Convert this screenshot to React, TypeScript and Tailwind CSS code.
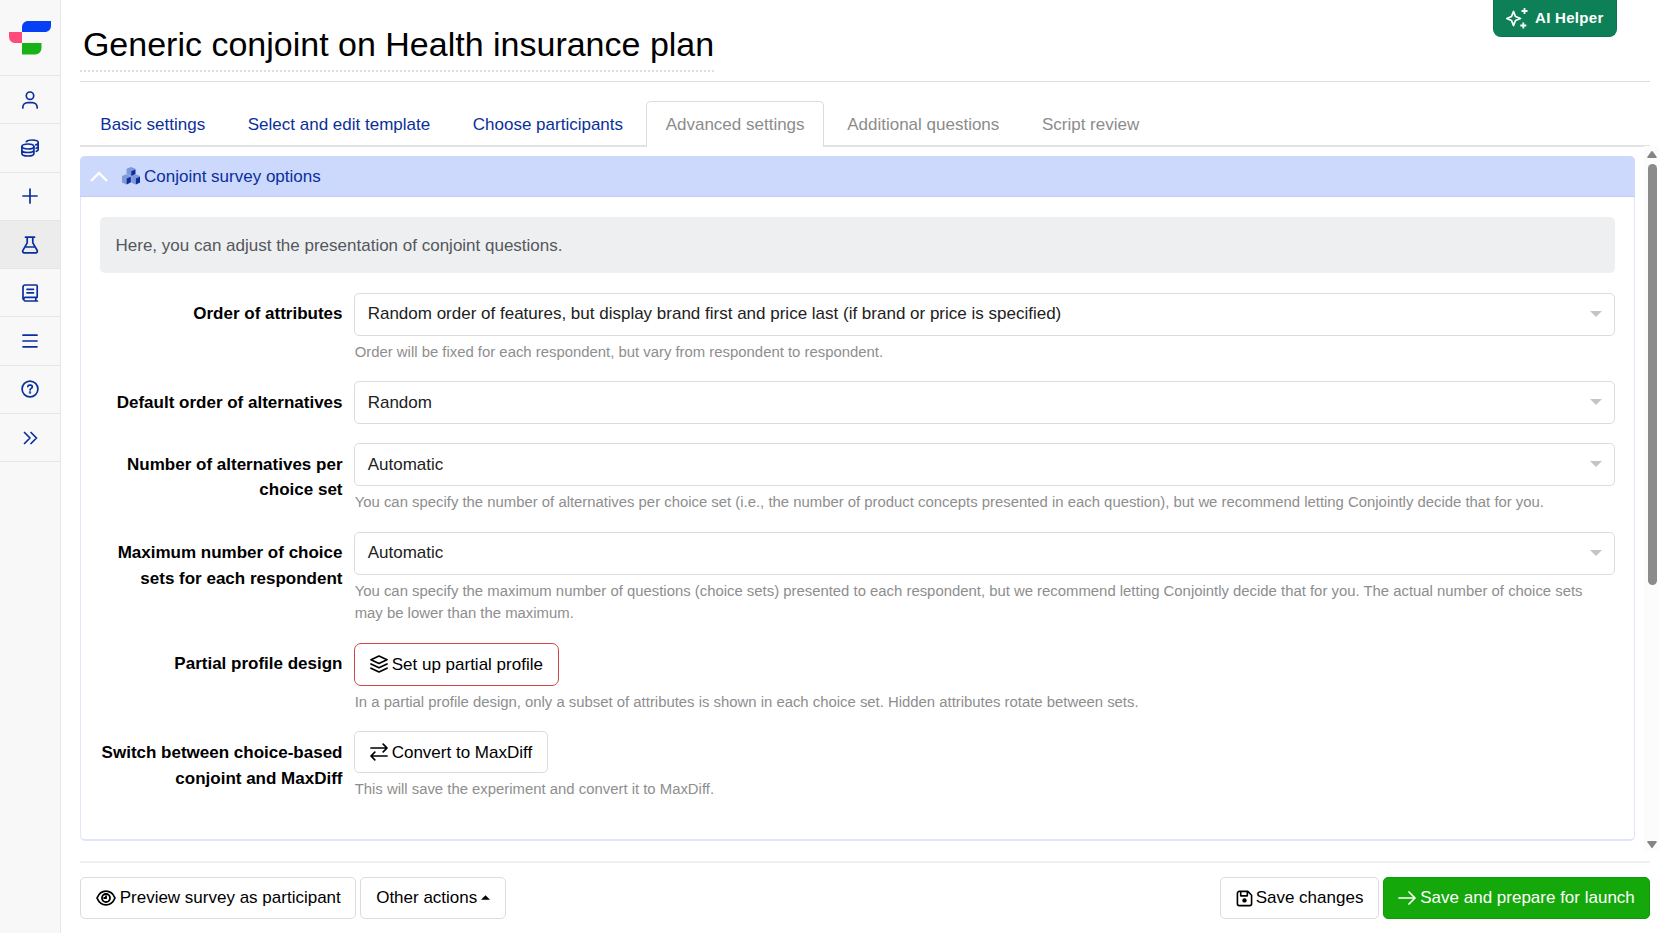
import React, { ReactNode } from "react";

interface IconProps {
  children: ReactNode;
  size?: number;
  className?: string;
}

const Icon = ({ children, size = 18, className = "" }: IconProps) => (
  <svg
    className={`shrink-0 ${className}`}
    width={size}
    height={size}
    viewBox="0 0 18 18"
    fill="none"
    stroke="currentColor"
    strokeWidth="1.7"
    strokeLinecap="round"
    strokeLinejoin="round"
  >
    {children}
  </svg>
);

const menuItems: { name: string; active?: boolean; icon: ReactNode }[] = [
  {
    name: "account",
    icon: (
      <>
        <circle cx="9" cy="4.700" r="3.700" />
        <path d="M1.800 17v-.4c0-3 2.300-5 5-5h4.400c2.700 0 5 2 5 5v.4" />
      </>
    ),
  },
  {
    name: "billing",
    icon: (
      <>
        <ellipse cx="6.900" cy="7.500" rx="6" ry="2.500" />
        <path d="M.9 7.500v7c0 1.400 2.700 2.500 6 2.500s6-1.100 6-2.500v-7M.9 11c0 1.400 2.700 2.500 6 2.500s6-1.100 6-2.500" />
        <path d="M5.300 2.700C6.300 1.600 8.600 1 11.200 1c3.300 0 6 1 6 2.500v7c0 .8-.8 1.400-1.900 1.800M17.200 3.700c0 1-.9 1.800-2.400 2.200M17.200 7.300c0 .9-.8 1.500-2 1.900" />
      </>
    ),
  },
  { name: "create", icon: <path d="M9 2v14M2 9h14" /> },
  {
    name: "experiments",
    active: true,
    icon: (
      <path d="M4.500 1.200h9M6.200 1.200v5.600l-4.300 7.500c-.7 1.200 0 2.500 1.400 2.500h11.400c1.400 0 2.100-1.300 1.400-2.500l-4.300-7.500V1.200M4.300 11h9.400" />
    ),
  },
  {
    name: "library",
    icon: (
      <>
        <path d="M16.200 13.300H4A2 2 0 0 0 4 17h12.500M2 15V3.300C2 2 2.900 1 4.200 1h11c.6 0 1 .4 1 1v10.300c0 .6-.4 1-1 1M14.800 13.500V17" />
        <path d="M6 5.300h6.500M6 8.800h6.500" />
      </>
    ),
  },
  { name: "menu", icon: <path d="M2 3.200h14M2 9h14M2 14.800h14" /> },
  {
    name: "help",
    icon: (
      <>
        <circle cx="9" cy="9" r="7.900" />
        <path d="M6.800 6.700c.1-.9.800-1.500 1.700-1.500h1c1 0 1.800.8 1.800 1.700 0 1.500-2.200 1.500-2.200 2.900v.2" />
        <circle cx="9" cy="12.500" r=".4" />
      </>
    ),
  },
  { name: "expand", icon: <path d="M3.500 3.500 9 9l-5.500 5.500M10 3.500 15.500 9 10 14.500" /> },
];

const Sidebar = () => (
  <aside className="w-[61px] shrink-0 border-r border-[#e6e6e6] bg-[#f8f8f8] text-[#0a2f9c]">
    <div className="flex h-[76px] justify-center border-b border-[#e6e6e6] pt-[20px]">
      <svg width="42" height="35" viewBox="0 0 42 35">
        <path d="M13 12V7.500C13 3.500 15.500 1 19.500 1H42v4.500c0 4-2.500 6.500-6.500 6.500z" fill="#0540f5" />
        <path d="M0 12h13v11H6.500C2.500 23 0 20.500 0 16.500z" fill="#ff4b79" />
        <path d="M13 23h19.500v4.500c0 4-2.500 7-6.500 7H13z" fill="#17b217" />
      </svg>
    </div>
    {menuItems.map((item) => (
      <div
        key={item.name}
        className={`flex h-[48.300px] items-center justify-center border-b border-[#e6e6e6] ${
          item.active ? "bg-[#ececec]" : ""
        }`}
      >
        <Icon>{item.icon}</Icon>
      </div>
    ))}
  </aside>
);

const tabs = [
  { label: "Basic settings", state: "done" },
  { label: "Select and edit template", state: "done" },
  { label: "Choose participants", state: "done" },
  { label: "Advanced settings", state: "current" },
  { label: "Additional questions", state: "disabled" },
  { label: "Script review", state: "disabled" },
];

const tabStyles: Record<string, string> = {
  done: "border-transparent text-[#0a2f9c]",
  current: "border-[#dcdcdc] bg-white text-[#8c8c8c] -mb-[2px] pb-[2px]",
  disabled: "border-transparent text-[#8c8c8c]",
};

const Tabs = () => (
  <nav className="flex h-[65px] items-stretch gap-[3px] border-b-2 border-[#e2e2e2] pt-[19px] pl-[0.500px]">
    {tabs.map((tab) => (
      <div
        key={tab.label}
        className={`flex items-center rounded-t-[5px] border border-b-0 px-[18.800px] ${tabStyles[tab.state]}`}
      >
        <span className="pt-[2px]">{tab.label}</span>
      </div>
    ))}
  </nav>
);

interface RowProps {
  label: string;
  help?: string;
  children: ReactNode;
}

const FormRow = ({ label, help, children }: RowProps) => (
  <div className="mb-[18.900px] flex gap-[11.500px]">
    <div className="w-[242.500px] shrink-0 pt-[8.400px] text-right leading-[25.700px] font-bold text-black">
      {label}
    </div>
    <div className="flex-1">
      {children}
      {help && (
        <p className="mt-[4.800px] pr-3 pl-[0.700px] text-[14.880px] leading-[22px] text-[#8e8e8e]">
          {help}
        </p>
      )}
    </div>
  </div>
);

const Select = ({ value }: { value: string }) => (
  <div className="flex h-[43px] items-center justify-between rounded-[5px] border border-[#dcdcdc] bg-white pr-[12.500px] pb-[1px] pl-[12.700px] text-[#212121]">
    {value}
    <svg width="12" height="6" viewBox="0 0 12 6" fill="#c4c4c4">
      <path d="M0 0h12L6 6z" />
    </svg>
  </div>
);

interface ButtonProps {
  children: ReactNode;
  className?: string;
}

const Button = ({
  children,
  className = "h-[42px] px-[14.700px] border-[#dcdcdc] rounded-[5px] text-black",
}: ButtonProps) => (
  <button className={`flex items-center gap-[4px] border whitespace-nowrap ${className}`}>
    {children}
  </button>
);

const CubesIcon = () => (
  <svg className="mr-[4px] shrink-0" width="18" height="18" viewBox="0 0 18 18">
    <path d="m9 0 4.400 1.800v5.300L9 9 4.600 7.100V1.800z" fill="#8099d8" />
    <path d="m4.400 7.200 4.400 1.700v6.300L4.400 17.400 0 15.400V9z" fill="#8099d8" />
    <path d="m13.600 7.200 4.400 1.700v6.500l-4.400 2-4.400-2V9z" fill="#8099d8" />
    <path d="m9.300 4.300 4.100-1.900v4.700L9.300 9zM4.700 11.500l4.100-1.800v5.500l-4.100 2.200zM13.900 11.500l4.100-1.800v5.700l-4.100 2z" fill="#0a2f9c" />
  </svg>
);

const OptionsPanel = () => (
  <section className="mt-[10px] h-[685px] w-[1555px] rounded-[5px] border border-t-0 border-b-2 border-[#e0e5fd]">
    <div className="-mx-px flex h-[41px] items-center rounded-t-[5px] border-b border-[#c0cdfa] bg-[#ccd8fc] pl-[10px] text-[#0a2f9c]">
      <svg className="mr-[14px]" width="18" height="11" viewBox="0 0 18 11" fill="none" stroke="white" strokeWidth="2.400">
        <path d="m1 10 8-8 8 8" />
      </svg>
      <CubesIcon />
      <span className="pt-[2px]">Conjoint survey options</span>
    </div>
    <div className="px-[19px] pt-[20px]">
      <div className="mb-[19.800px] flex h-[56px] items-center rounded-[5px] bg-[#eeeff1] px-[15.500px] pt-[1px] text-[#54575c]">
        Here, you can adjust the presentation of conjoint questions.
      </div>
      <FormRow
        label="Order of attributes"
        help="Order will be fixed for each respondent, but vary from respondent to respondent."
      >
        <Select value="Random order of features, but display brand first and price last (if brand or price is specified)" />
      </FormRow>
      <FormRow label="Default order of alternatives">
        <Select value="Random" />
      </FormRow>
      <FormRow
        label="Number of alternatives per choice set"
        help="You can specify the number of alternatives per choice set (i.e., the number of product concepts presented in each question), but we recommend letting Conjointly decide that for you."
      >
        <Select value="Automatic" />
      </FormRow>
      <FormRow
        label="Maximum number of choice sets for each respondent"
        help="You can specify the maximum number of questions (choice sets) presented to each respondent, but we recommend letting Conjointly decide that for you. The actual number of choice sets may be lower than the maximum."
      >
        <Select value="Automatic" />
      </FormRow>
      <FormRow
        label="Partial profile design"
        help="In a partial profile design, only a subset of attributes is shown in each choice set. Hidden attributes rotate between sets."
      >
        <Button className="h-[43px] rounded-[7px] border-[#d04545] px-[14.700px] text-black">
          <Icon>
            <path d="M9 1 17 4.700 9 8.400 1 4.700zM1 9l8 3.700L17 9M1 13.200l8 3.700 8-3.700" />
          </Icon>
          Set up partial profile
        </Button>
      </FormRow>
      <FormRow
        label="Switch between choice-based conjoint and MaxDiff"
        help="This will save the experiment and convert it to MaxDiff."
      >
        <Button>
          <Icon>
            <path d="M1 5h16M13.200 1.200 17 5l-3.800 3.800M17 13H1M4.800 9.200 1 13l3.800 3.800" />
          </Icon>
          Convert to MaxDiff
        </Button>
      </FormRow>
    </div>
  </section>
);

const Scrollbar = () => (
  <div className="flex w-[15px] flex-col items-center bg-[#fcfcfc] pt-[5px] pb-[3px] pl-[1px]">
    <svg width="10" height="7" viewBox="0 0 10 7" fill="#858585">
      <path d="M4.200.6a1 1 0 0 1 1.600 0L9.600 5.800Q10 7 9 7H1Q0 7 .4 5.800z" />
    </svg>
    <div className="mt-[6px] h-[421px] w-[9px] rounded-full bg-[#8b8b8b]" />
    <svg className="mt-auto" width="10" height="7" viewBox="0 0 10 7" fill="#858585">
      <path d="M4.200 6.400a1 1 0 0 0 1.600 0L9.600 1.200Q10 0 9 0H1Q0 0 .4 1.200z" />
    </svg>
  </div>
);

const Footer = () => (
  <footer className="mr-[9px] mt-[10px] flex gap-[4px] border-t-2 border-[#f0f0f0] pt-[14px]">
    <Button>
      <svg width="20" height="18" viewBox="0 0 20 18" fill="none" stroke="currentColor" strokeWidth="1.800">
        <path d="M1 9c1.700-4 5-6.900 9-6.900S17.300 5 19 9c-1.700 4-5 6.900-9 6.900S2.700 13 1 9z" strokeLinejoin="round" />
        <circle cx="10" cy="9" r="4" />
        <path d="M10 6.500V9H7.500" />
      </svg>
      Preview survey as participant
    </Button>
    <Button>
      Other actions
      <svg width="9" height="5" viewBox="0 0 10 5" fill="currentColor" className="mb-[2px]">
        <path d="M0 5h10L5 0z" />
      </svg>
    </Button>
    <div className="ml-auto flex gap-[4px]">
      <Button>
        <Icon size={17} className="-mr-px">
          <path d="M1.500 3.500a2 2 0 0 1 2-2h9l4 4v9a2 2 0 0 1-2 2h-11a2 2 0 0 1-2-2zM5 1.700v4.500h7V1.700" />
          <circle cx="9" cy="11" r="1.500" fill="currentColor" />
        </Icon>
        Save changes
      </Button>
      <Button className="h-[42px] rounded-[5px] border-[#109c08] bg-[#14a80a] px-[14.200px] text-white">
        <Icon>
          <path d="M1 9h16M11 3l6 6-6 6" />
        </Icon>
        Save and prepare for launch
      </Button>
    </div>
  </footer>
);

const App = () => {
  return (
    <div className="relative flex h-[933px] w-[1659px] overflow-hidden bg-white font-['Liberation_Sans',Arial,sans-serif] text-[17px]">
      <Sidebar />
      <main className="flex flex-1 flex-col pl-[19px]">
        <header className="mr-[9px] h-[82px] border-b border-[#dcdcdc] pt-[20px]">
          <h1 className="inline-block h-[52px] border-b-2 border-dotted border-[#dedede] pl-[2.900px] text-[34px] leading-[48px] text-black">
            Generic conjoint on Health insurance plan
          </h1>
        </header>
        <div className="mr-[9px]">
          <Tabs />
        </div>
        <div className="-mt-px flex h-[705px] justify-between">
          <OptionsPanel />
          <Scrollbar />
        </div>
        <Footer />
      </main>
      <div className="absolute top-0 right-[42px] flex h-[37px] w-[124px] items-center rounded-b-[8px] border border-t-0 border-[#0b754f] bg-[#0d8058] pl-[12px] text-[15px] font-bold tracking-[0.300px] text-white">
        <svg className="mr-[7px]" width="22" height="22" viewBox="0 0 22 22" fill="none" stroke="white" strokeWidth="1.800" strokeLinejoin="round">
          <path d="M7.500 4.500 9.500 9.500 14.500 11.500 9.500 13.500 7.500 18.500 5.500 13.500.8 11.500 5.500 9.500z" />
          <path d="M18.500 1v6M15.500 4h6M17.300 15.500v6M14.300 18.500h6" />
        </svg>
        AI Helper
      </div>
    </div>
  );
};

export default App;
